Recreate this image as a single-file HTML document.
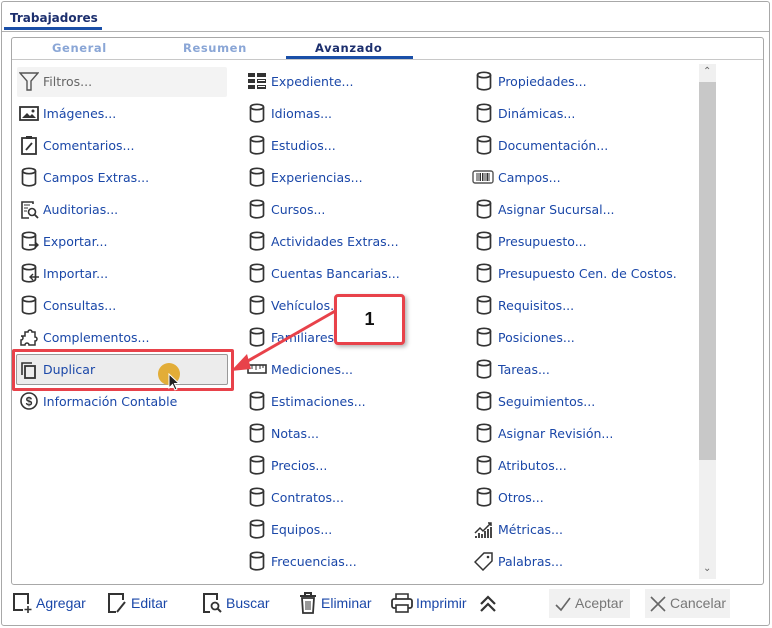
<!DOCTYPE html>
<html><head><meta charset="utf-8"><style>
*{box-sizing:border-box;margin:0;padding:0}
body{width:772px;height:628px;background:#fff;font-family:"DejaVu Sans",Verdana,sans-serif;font-size:12.5px;position:relative;overflow:hidden}
.outer{position:absolute;left:1px;top:1px;width:769px;height:625px;border:1px solid #a8a8a8;border-radius:3px}
.ttl{position:absolute;left:10px;top:11px;font-weight:bold;color:#1c2f6e;font-size:12px}
.tul{position:absolute;left:4px;top:27px;width:98px;height:3px;background:#1a4fa8}
.hline{position:absolute;left:2px;top:31px;width:767px;height:1px;background:#b0b0b0}
.panel{position:absolute;left:11px;top:37px;width:753px;height:548px;border:1px solid #a8a8a8;border-radius:3px}
.sub{position:absolute;top:41px;font-weight:bold;font-size:11.5px;letter-spacing:.6px}
.subline{position:absolute;left:12px;top:59px;width:751px;height:1px;background:#c8c8c8}
.item{position:absolute;height:20px;line-height:20px;color:#1a47a8;white-space:nowrap;margin-top:1px}
.item svg{position:absolute;left:-24px;top:-1px}
.scroll{position:absolute;left:699px;top:64px;width:17px;height:515px;background:#f0f0f0}
.thumb{position:absolute;left:699px;top:82px;width:17px;height:378px;background:#c8c8c8}
.bar{position:absolute;top:593px;height:20px;line-height:20px;font-family:"Liberation Sans Narrow","Liberation Sans",sans-serif;font-size:14px;color:#1a47a8}
.bar svg{position:absolute;left:-24px;top:0}
.btn{position:absolute;top:589px;height:29px;background:#f1f1f1;color:#777;font-family:"Liberation Sans Narrow","Liberation Sans",sans-serif;font-size:14px;line-height:29px}
</style></head><body>
<div class="outer"></div>
<div class="ttl">Trabajadores</div>
<div class="tul"></div>
<div class="hline"></div>
<div class="panel"></div>
<div class="sub" style="left:52px;color:#8aa6d6">General</div>
<div class="sub" style="left:183px;color:#8aa6d6">Resumen</div>
<div class="sub" style="left:315px;color:#1c2f6e">Avanzado</div>
<div style="position:absolute;left:286px;top:56px;width:127px;height:3px;background:#1a4fa8"></div>
<div class="subline"></div>
<div style="position:absolute;left:17px;top:67px;width:210px;height:30px;background:#f3f3f3;border-radius:2px"></div>
<div class="scroll"></div><div class="thumb"></div>
<div style="position:absolute;left:703px;top:66px;color:#666;font-size:10px">&#8963;</div>
<div style="position:absolute;left:703px;top:563px;color:#666;font-size:10px">&#8964;</div>
<svg width="0" height="0" style="position:absolute"><defs>
<symbol id="cyl" viewBox="0 0 20 20"><ellipse cx="10" cy="4" rx="6.5" ry="2.7" fill="none" stroke="#333" stroke-width="1.7"/><path d="M3.5 4V16C3.5 17.6 6.5 18.8 10 18.8S16.5 17.6 16.5 16V4" fill="none" stroke="#333" stroke-width="1.7"/></symbol>
</defs></svg>
<div style="position:absolute;left:12px;top:349px;width:222px;height:42px;border:3px solid #e8424a;border-radius:2px"></div>
<div style="position:absolute;left:16px;top:354px;width:212px;height:31px;background:#ececec;border:1px solid #999;border-radius:2px"></div>
<div style="position:absolute;left:158px;top:363px;width:22px;height:22px;border-radius:50%;background:#e2ad38"></div>
<svg style="position:absolute;left:168px;top:373px" width="12" height="18"><path d="M1 1V15L4.5 11.5L7 17L9 16L6.5 10.5H11Z" fill="#222" stroke="#fff" stroke-width="1"/></svg>
<div class="item" style="left:43px;top:71px;color:#666"><svg width="20" height="20" viewBox="0 0 20 20"><path d="M1 2H19L12 10V19H8V10Z" fill="none" stroke="#555" stroke-width="1.4"/></svg>Filtros...</div>
<div class="item" style="left:43px;top:103px"><svg width="20" height="20"><rect x="1" y="4" width="18" height="13" fill="none" stroke="#333" stroke-width="1.8"/><path d="M3 15L8 10L11 13L13 11L17 15Z" fill="#333"/><circle cx="14" cy="8" r="1.5" fill="#333"/></svg>Imágenes...</div>
<div class="item" style="left:43px;top:135px"><svg width="20" height="20"><rect x="3" y="3" width="14" height="16" fill="none" stroke="#333" stroke-width="1.8"/><rect x="7" y="1" width="6" height="3" fill="#333"/><path d="M7 15L13 8" stroke="#333" stroke-width="1.8"/></svg>Comentarios...</div>
<div class="item" style="left:43px;top:167px"><svg width="20" height="20"><use href="#cyl"/></svg>Campos Extras...</div>
<div class="item" style="left:43px;top:199px"><svg width="20" height="20"><path d="M14 5V3H3V19H10" fill="none" stroke="#333" stroke-width="1.6"/><path d="M5 6H11M5 9H9M5 12H8" stroke="#333"/><circle cx="13" cy="13" r="3.5" fill="none" stroke="#333" stroke-width="1.6"/><path d="M15.5 15.5L19 19" stroke="#333" stroke-width="1.8"/></svg>Auditorias...</div>
<div class="item" style="left:43px;top:231px"><svg width="20" height="20"><use href="#cyl"/><path d="M10 14H19M16 11L19 14L16 17" fill="none" stroke="#333" stroke-width="1.4"/></svg>Exportar...</div>
<div class="item" style="left:43px;top:263px"><svg width="20" height="20"><use href="#cyl"/><path d="M20 14H11M14 11L11 14L14 17" fill="none" stroke="#333" stroke-width="1.4"/></svg>Importar...</div>
<div class="item" style="left:43px;top:295px"><svg width="20" height="20"><use href="#cyl"/></svg>Consultas...</div>
<div class="item" style="left:43px;top:327px"><svg width="20" height="20"><path d="M2 9H6V5H9A2 2 0 0 1 13 5H16V10A2 2 0 0 1 16 14V18H10A2 2 0 0 0 6 18H2V13A2 2 0 0 0 2 9Z" fill="none" stroke="#333" stroke-width="1.5"/></svg>Complementos...</div>
<div class="item" style="left:43px;top:359px"><svg width="20" height="20"><path d="M13 4H3V16" fill="none" stroke="#333" stroke-width="1.6"/><rect x="6" y="7" width="10" height="12" fill="none" stroke="#333" stroke-width="1.8"/></svg>Duplicar</div>
<div class="item" style="left:43px;top:391px"><svg width="20" height="20"><circle cx="10" cy="10" r="8" fill="none" stroke="#333" stroke-width="1.6"/><text x="10" y="14.5" text-anchor="middle" font-size="12" font-weight="bold" fill="#333" font-family="Liberation Sans">$</text></svg>Información Contable</div>

<div class="item" style="left:271px;top:71px"><svg width="20" height="20"><path d="M1 2H8V6H1ZM10 2H19V6H10ZM1 8H8V12H1ZM10 8H19V12H10ZM1 14H8V18H1ZM10 14H19V18H10Z" fill="#333"/><path d="M11 9.5H18M11 15.5H18" stroke="#fff"/></svg>Expediente...</div>
<div class="item" style="left:271px;top:103px"><svg width="20" height="20"><use href="#cyl"/></svg>Idiomas...</div>
<div class="item" style="left:271px;top:135px"><svg width="20" height="20"><use href="#cyl"/></svg>Estudios...</div>
<div class="item" style="left:271px;top:167px"><svg width="20" height="20"><use href="#cyl"/></svg>Experiencias...</div>
<div class="item" style="left:271px;top:199px"><svg width="20" height="20"><use href="#cyl"/></svg>Cursos...</div>
<div class="item" style="left:271px;top:231px"><svg width="20" height="20"><use href="#cyl"/></svg>Actividades Extras...</div>
<div class="item" style="left:271px;top:263px"><svg width="20" height="20"><use href="#cyl"/></svg>Cuentas Bancarias...</div>
<div class="item" style="left:271px;top:295px"><svg width="20" height="20"><use href="#cyl"/></svg>Vehículos...</div>
<div class="item" style="left:271px;top:327px"><svg width="20" height="20"><use href="#cyl"/></svg>Familiares...</div>
<div class="item" style="left:271px;top:359px"><svg width="20" height="20"><rect x="1" y="6" width="18" height="8" fill="none" stroke="#333" stroke-width="1.6"/><path d="M5 6V10M9 6V11M13 6V10M16 6V9" stroke="#333"/></svg>Mediciones...</div>
<div class="item" style="left:271px;top:391px"><svg width="20" height="20"><use href="#cyl"/></svg>Estimaciones...</div>
<div class="item" style="left:271px;top:423px"><svg width="20" height="20"><use href="#cyl"/></svg>Notas...</div>
<div class="item" style="left:271px;top:455px"><svg width="20" height="20"><use href="#cyl"/></svg>Precios...</div>
<div class="item" style="left:271px;top:487px"><svg width="20" height="20"><use href="#cyl"/></svg>Contratos...</div>
<div class="item" style="left:271px;top:519px"><svg width="20" height="20"><use href="#cyl"/></svg>Equipos...</div>
<div class="item" style="left:271px;top:551px"><svg width="20" height="20"><use href="#cyl"/></svg>Frecuencias...</div>

<div class="item" style="left:498px;top:71px"><svg width="20" height="20"><use href="#cyl"/></svg>Propiedades...</div>
<div class="item" style="left:498px;top:103px"><svg width="20" height="20"><use href="#cyl"/></svg>Dinámicas...</div>
<div class="item" style="left:498px;top:135px"><svg width="20" height="20"><use href="#cyl"/></svg>Documentación...</div>
<div class="item" style="left:498px;top:167px"><svg width="22" height="20" style="left:-26px"><rect x="1" y="4" width="20" height="12" rx="2" fill="none" stroke="#555" stroke-width="1.4"/><path d="M5 6V14M7 6V14M8.5 6V14M10.5 6V14M12 6V14M14 6V14M15.5 6V14M17 6V14" stroke="#333"/></svg>Campos...</div>
<div class="item" style="left:498px;top:199px"><svg width="20" height="20"><use href="#cyl"/></svg>Asignar Sucursal...</div>
<div class="item" style="left:498px;top:231px"><svg width="20" height="20"><use href="#cyl"/></svg>Presupuesto...</div>
<div class="item" style="left:498px;top:263px"><svg width="20" height="20"><use href="#cyl"/></svg>Presupuesto Cen. de Costos.</div>
<div class="item" style="left:498px;top:295px"><svg width="20" height="20"><use href="#cyl"/></svg>Requisitos...</div>
<div class="item" style="left:498px;top:327px"><svg width="20" height="20"><use href="#cyl"/></svg>Posiciones...</div>
<div class="item" style="left:498px;top:359px"><svg width="20" height="20"><use href="#cyl"/></svg>Tareas...</div>
<div class="item" style="left:498px;top:391px"><svg width="20" height="20"><use href="#cyl"/></svg>Seguimientos...</div>
<div class="item" style="left:498px;top:423px"><svg width="20" height="20"><use href="#cyl"/></svg>Asignar Revisión...</div>
<div class="item" style="left:498px;top:455px"><svg width="20" height="20"><use href="#cyl"/></svg>Atributos...</div>
<div class="item" style="left:498px;top:487px"><svg width="20" height="20"><use href="#cyl"/></svg>Otros...</div>
<div class="item" style="left:498px;top:519px"><svg width="20" height="20"><path d="M1 14L6 9L9 12L17 4M14 4H17V7" fill="none" stroke="#333" stroke-width="1.5"/><path d="M2 19V17M5 19V14M8 19V15M11 19V12M14 19V10M17 19V8" stroke="#333" stroke-width="1.8"/></svg>Métricas...</div>
<div class="item" style="left:498px;top:551px"><svg width="20" height="20"><path d="M10 2H18V10L9 19L1 11Z" fill="none" stroke="#333" stroke-width="1.5"/><circle cx="14" cy="6" r="1.3" fill="#333"/></svg>Palabras...</div>

<svg style="position:absolute;left:225px;top:290px" width="190" height="100"><path d="M112 20L14 76" stroke="#e8424a" stroke-width="3"/><path d="M6 81L22 64L26 79Z" fill="#e8424a"/></svg>
<div style="position:absolute;left:334px;top:294px;width:71px;height:51px;background:#fff;border:3px solid #e8424a;border-radius:4px;box-shadow:2px 2px 4px rgba(0,0,0,.3);text-align:center;line-height:45px;font-family:'Liberation Sans',sans-serif;font-weight:bold;font-size:18px;color:#111">1</div>

<div class="bar" style="left:36px"><svg width="24" height="24" viewBox="0 0 24 24" style="left:-25px;top:-2px"><path d="M12 19H3V3H17V13" fill="none" stroke="#333" stroke-width="2"/><path d="M17 15V22M13.5 18.5H20.5" stroke="#333" stroke-width="1.6"/></svg>Agregar</div>
<div class="bar" style="left:131px"><svg width="24" height="24" viewBox="0 0 24 24" style="left:-25px;top:-2px"><path d="M10 21H3V3H17V9" fill="none" stroke="#333" stroke-width="2"/><path d="M11 21L19 11" stroke="#333" stroke-width="2"/></svg>Editar</div>
<div class="bar" style="left:226px"><svg width="24" height="24" viewBox="0 0 24 24" style="left:-25px;top:-2px"><path d="M9 21H3V3H16V9" fill="none" stroke="#333" stroke-width="2"/><circle cx="14" cy="15" r="3.5" fill="none" stroke="#333" stroke-width="1.8"/><path d="M16.5 17.5L20 21" stroke="#333" stroke-width="2"/></svg>Buscar</div>
<div class="bar" style="left:321px"><svg width="24" height="24" viewBox="0 0 24 24" style="left:-25px;top:-2px"><path d="M4 5H20M9 5V2H15V5" fill="none" stroke="#333" stroke-width="2"/><path d="M6 7H18L17 22H7Z" fill="none" stroke="#333" stroke-width="1.8"/><path d="M10 10V19M12 10V19M14 10V19" stroke="#333"/></svg>Eliminar</div>
<div class="bar" style="left:416px"><svg width="24" height="24" viewBox="0 0 24 24" style="left:-26px;top:-2px"><path d="M6 8V3H18V8" fill="none" stroke="#333" stroke-width="1.6"/><rect x="2" y="8" width="20" height="9" rx="2" fill="none" stroke="#333" stroke-width="1.8"/><rect x="6" y="14" width="12" height="7" fill="#fff" stroke="#333" stroke-width="1.6"/></svg>Imprimir</div>
<svg style="position:absolute;left:478px;top:594px" width="20" height="20"><path d="M3 10L10 3L17 10M3 17L10 10L17 17" fill="none" stroke="#333" stroke-width="2.2"/></svg>
<div class="btn" style="left:549px;width:81px;padding-left:26px">Aceptar<svg style="position:absolute;left:5px;top:6px" width="18" height="18"><path d="M2 10L7 15L16 3" fill="none" stroke="#666" stroke-width="1.6"/></svg></div>
<div class="btn" style="left:645px;width:85px;padding-left:25px">Cancelar<svg style="position:absolute;left:4px;top:6px" width="18" height="18"><path d="M2 2L16 16M16 2L2 16" stroke="#666" stroke-width="1.6"/></svg></div>
</body></html>
